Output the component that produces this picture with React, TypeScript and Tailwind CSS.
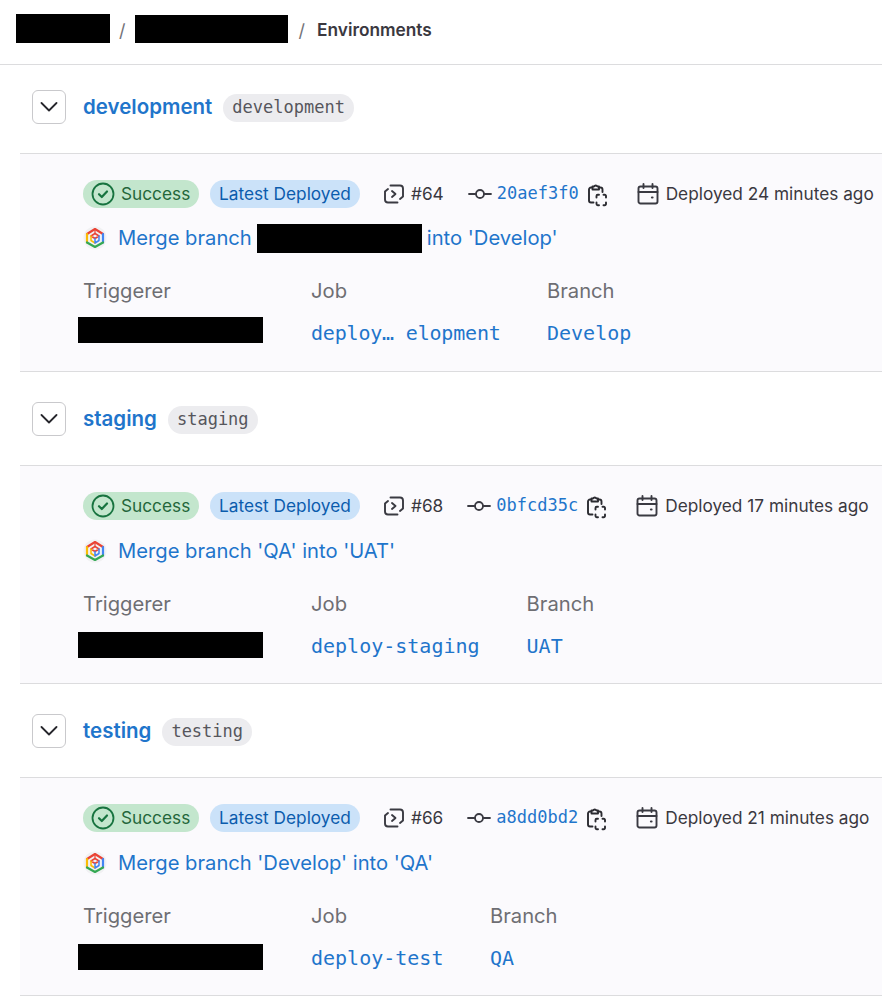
const mono = "font-['DejaVu_Sans_Mono','Liberation_Mono',monospace]";

const LogoIcon = () => (
    <svg width="24" height="24" viewBox="0 0 24 24" fill="none" strokeLinecap="round" strokeLinejoin="round" className="shrink-0">
        <circle cx="12" cy="12" r="11.5" fill="#f1f1f3" />
        <path d="M4 8 12 3l8 5" stroke="#ea4335" strokeWidth="2.200" />
        <path d="M4 8v8.500" stroke="#fbbc04" strokeWidth="2.200" />
        <path d="M20 8v8.500" stroke="#4285f4" strokeWidth="2.200" />
        <path d="m4 16.500 8 4.500 8-4.500" stroke="#34a853" strokeWidth="2.200" />
        <path d="M12 7.500 8 10l4 2.500 4-2.500z" stroke="#ea4335" strokeWidth="1.500" />
        <path d="M8 10v4.500l4 2.500" stroke="#fbbc04" strokeWidth="1.500" />
        <path d="M16 10v4.500L12 17v-4.500" stroke="#4285f4" strokeWidth="1.500" />
        <path d="M12 3v4.500" stroke="#ea4335" strokeWidth="1.200" />
    </svg>
);

const RunIcon = () => (
    <svg width="22" height="22" viewBox="0 0 22 22" fill="none" stroke="#3a3a42" strokeWidth="1.9" strokeLinecap="round" strokeLinejoin="round" className="shrink-0">
        <path d="M5 6 2 8.500v8a3 3 0 0 0 3 3h9.500" />
        <path d="M7.500 2.500H17a3 3 0 0 1 3 3v8L17 16" />
        <path d="m9 8 3.500 3L9 14" />
    </svg>
);

const CommitIcon = () => (
    <svg width="24" height="14" viewBox="0 0 24 14" fill="none" stroke="#3a3a42" strokeWidth="1.8" strokeLinecap="round" className="shrink-0">
        <circle cx="12" cy="7" r="4" />
        <path d="M1 7h7M16 7h7" />
    </svg>
);

const CopyIcon = () => (
    <svg width="20" height="25" viewBox="0 0 20 25" fill="none" stroke="#2b2b31" strokeWidth="1.9" strokeLinecap="round" strokeLinejoin="round" className="shrink-0">
        <path d="M4 4.500H3a2 2 0 0 0-2 2v11a2 2 0 0 0 2 2h2.500" />
        <path d="M11.500 4.500H12.500a2 2 0 0 1 2 2V9" />
        <path d="M4.500 6.500V3.500h1.500a2 2 0 0 1 3.500 0H11v3z" />
        <path d="M8.500 14.500V13a1.200 1.200 0 0 1 1.200-1.200h1.300" />
        <path d="M15.500 11.800h1.300A1.200 1.200 0 0 1 18 13v1.500" />
        <path d="M18 19.500V21a1.200 1.200 0 0 1-1.200 1.200h-1.300" />
        <path d="M11 22.200H9.700A1.200 1.200 0 0 1 8.500 21v-1.500" />
    </svg>
);

const CalendarIcon = () => (
    <svg width="22" height="22" viewBox="0 0 22 22" fill="none" stroke="#3a3a42" strokeWidth="1.9" strokeLinecap="round" strokeLinejoin="round" className="shrink-0">
        <rect x="1.500" y="3.500" width="19" height="17" rx="2" />
        <path d="M1.500 9h19M6.500 1v4M15.500 1v4" />
        <path d="M15 14.500h.5" strokeWidth="2.200" />
    </svg>
);

const CheckIcon = () => (
    <svg width="24" height="24" viewBox="0 0 24 24" fill="none" stroke="#17733f" strokeWidth="1.8" strokeLinecap="round" strokeLinejoin="round" className="shrink-0">
        <circle cx="12" cy="12" r="10.500" />
        <path d="m8 12.200 2.800 2.800L16 9.500" strokeWidth="2.200" />
    </svg>
);

const ChevronIcon = () => (
    <svg width="18" height="10" viewBox="0 0 18 10" fill="none" stroke="#26262c" strokeWidth="1.800" strokeLinecap="round" strokeLinejoin="round">
        <path d="m1.500 1 7.500 7.500L16.500 1" />
    </svg>
);

type Env = {
    name: string;
    run: string;
    sha: string;
    ago: string;
    job: string;
    jobClass?: string;
    branch: string;
    heading: string;
    msgGap: string;
    triggerGap: string;
    redacted?: boolean;
    message?: string;
};

const envs: Env[] = [
    { name: 'development', heading: 'h-[88px]', msgGap: 'mt-[15px]', triggerGap: 'mt-[12px]', run: '#64', sha: '20aef3f0', ago: 'Deployed 24 minutes ago', job: 'deploy… elopment', jobClass: 'w-[189px] tracking-[-0.19px]', branch: 'Develop', redacted: true },
    { name: 'staging', heading: 'h-[93px]', msgGap: 'mt-[16px]', triggerGap: 'mt-[14px]', run: '#68', sha: '0bfcd35c', ago: 'Deployed 17 minutes ago', job: 'deploy-staging', branch: 'UAT', message: "'QA' into 'UAT'" },
    { name: 'testing', heading: 'h-[93px]', msgGap: 'mt-[16px]', triggerGap: 'mt-[14px]', run: '#66', sha: 'a8dd0bd2', ago: 'Deployed 21 minutes ago', job: 'deploy-test', jobClass: 'w-[132px]', branch: 'QA', message: "'Develop' into 'QA'" },
];

const Section = ({ env }: { env: Env }) => {
    return (
        <div>
            <div className={`flex items-end pb-[29px] ml-[32px] ${env.heading}`}>
                <button className="flex items-center justify-center w-[34px] h-[34px] bg-white border border-[#c9c9cc] rounded-[6px]">
                    <ChevronIcon />
                </button>
                <div className="flex items-center h-[34px]">
                    <a className="ml-[17px] mt-[1px] text-[20.500px] font-semibold text-[#1f75cb]">{env.name}</a>
                    <span className={`ml-[11px] mt-[1px] flex items-center h-[28px] px-[9px] rounded-full bg-[#ececef] text-[#56565c] text-[17px] ${mono}`}>
                        {env.name}
                    </span>
                </div>
            </div>
            <div className="ml-[20px] h-[219px] pl-[63px] pt-[26px] border-t-[1.500px] border-b-[1.500px] border-[#dcdcde] bg-[#fbfafd]">
                <div className="flex items-center h-[28px] whitespace-nowrap text-[17.250px]">
                    <span className="flex items-center gap-[6px] h-[28px] w-[116px] shrink-0 pl-[8px] rounded-full bg-[#c3e6cd] text-[#24663b]">
                        <CheckIcon />
                        Success
                    </span>
                    <span className="flex items-center h-[28px] w-[150px] shrink-0 ml-[11px] pl-[9px] rounded-full bg-[#cbe2f9] text-[#0b5cad]">
                        Latest Deployed
                    </span>
                    <span className="ml-[23px]"><RunIcon /></span>
                    <span className="ml-[6px] text-[#3a383f]">{env.run}</span>
                    <span className="ml-[24px]"><CommitIcon /></span>
                    <a className={`ml-[5px] text-[17px] text-[#1f75cb] ${mono}`}>{env.sha}</a>
                    <span className="ml-[9px] mt-[3px]"><CopyIcon /></span>
                    <span className="ml-[29px]"><CalendarIcon /></span>
                    <span className="ml-[7px] text-[#3a383f]">{env.ago}</span>
                </div>
                <div className={`flex items-center h-[30px] whitespace-nowrap text-[20.200px] text-[#1f75cb] ${env.msgGap}`}>
                    <LogoIcon />
                    <span className="ml-[11px]">Merge branch</span>
                    {env.redacted ? (
                        <>
                            <span className="ml-[5px] w-[165px] h-[29px] bg-black" />
                            <span className="ml-[5px]">into 'Develop'</span>
                        </>
                    ) : null}
                    {env.message ? <span className="ml-[5.500px]">{env.message}</span> : null}
                </div>
                <div className="flex mt-[24px] gap-[47px]">
                    <div className="w-[181px]">
                        <div className="text-[20.200px] leading-[28px] text-[#6e6e73]">Triggerer</div>
                        <div className={`w-[185px] h-[26px] -ml-[5px] bg-black ${env.triggerGap}`} />
                    </div>
                    <div>
                        <div className="text-[20.200px] leading-[28px] text-[#6e6e73]">Job</div>
                        <a className={`block mt-[15px] text-[20px] leading-[26px] text-[#1f75cb] whitespace-nowrap ${mono} ${env.jobClass ?? ''}`}>{env.job}</a>
                    </div>
                    <div>
                        <div className="text-[20.200px] leading-[28px] text-[#6e6e73]">Branch</div>
                        <a className={`block mt-[15px] text-[20px] leading-[26px] text-[#1f75cb] whitespace-nowrap ${mono}`}>{env.branch}</a>
                    </div>
                </div>
            </div>
        </div>
    );
};

const App = () => {
    return (
        <div className="w-[882px] h-[999px] overflow-hidden bg-white font-['Inter',sans-serif]">
            <div className="flex items-center h-[65px] pl-[16px] pb-[7px] border-b-[1.500px] border-[#dcdcde]">
                <span className="w-[94px] h-[29px] bg-black" />
                <span className="ml-[9px] mt-[3px] text-[18px] text-[#737278]">/</span>
                <span className="ml-[9px] w-[153px] h-[28px] bg-black" />
                <span className="ml-[11px] mt-[3px] text-[18px] text-[#737278]">/</span>
                <span className="ml-[12px] mt-[3px] text-[17.300px] font-semibold text-[#3a383f]">Environments</span>
            </div>
            {envs.map((env) => (
                <Section key={env.name} env={env} />
            ))}
        </div>
    );
};

export default App;
